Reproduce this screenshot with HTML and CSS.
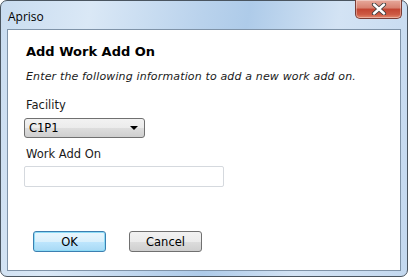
FILE: index.html
```html
<!DOCTYPE html>
<html lang="en">
<head>
<meta charset="utf-8">
<title>Apriso</title>
<link rel="stylesheet" href="styles.css">
</head>
<body>
<div class="window">
  <div class="titlebar">
    <span class="title">Apriso</span>
    <div class="close">
      <svg width="16" height="12" viewBox="0 0 16 12">
        <path d="M3 1.5 L13 10.5 M13 1.5 L3 10.5" stroke="#3d3d3d" stroke-width="4.2" stroke-linecap="round"/>
        <path d="M3 1.5 L13 10.5 M13 1.5 L3 10.5" stroke="#ffffff" stroke-width="2.4" stroke-linecap="round"/>
      </svg>
    </div>
  </div>
  <div class="pane">
    <h1 class="heading">Add Work Add On</h1>
    <p class="intro">Enter the following information to add a new work add on.</p>

    <div class="field">
      <label class="lbl">Facility</label>
      <div class="select">
        <span>C1P1</span>
        <span class="arrow"></span>
      </div>
    </div>

    <div class="field">
      <label class="lbl">Work Add On</label>
      <div class="input"></div>
    </div>

    <div class="buttons">
      <div class="btn ok">OK</div>
      <div class="btn">Cancel</div>
    </div>
  </div>
</div>
</body>
</html>
```

FILE: styles.css
```css
*{
box-sizing: border-box;
}

body{
margin: 0;
width: 408px;
height: 277px;
overflow: hidden;
font-family: "DejaVu Sans", Verdana, sans-serif;
}

.window{
width: 408px;
height: 277px;
border: 1px solid #4a5560;
border-radius: 7px;
background: linear-gradient(100deg, #c9dcf0 0%, #dae8f6 20%, #b9d2ec 45%, #aecbe9 55%, #d3e3f4 75%, #c3d8ef 100%);
display: flex;
flex-direction: column;
padding: 0 6px 5px 6px;
}

.titlebar{
height: 28px;
display: flex;
align-items: flex-start;
justify-content: space-between;
}

.title{
font-family: "Open Sans", "Noto Sans", sans-serif;
font-size: 12px;
color: #000;
margin-top: 7px;
margin-left: 1px;
}

.close{
width: 47px;
height: 19px;
margin-top: -1px;
margin-right: -1px;
border: 1px solid #7a3d36;
border-top: none;
border-radius: 0 0 5px 5px;
background: linear-gradient(#e7a99b 0%, #d7806f 45%, #c24431 50%, #cd5a44 80%, #e38a6f 100%);
display: flex;
align-items: center;
justify-content: center;
box-shadow: inset 0 0 0 1px rgba(255,255,255,0.35);
}

.pane{
flex: 1;
background: #fff;
border: 1px solid #7f93a8;
padding: 14px 18px 0 18px;
}

.heading{
font-size: 13px;
font-weight: bold;
margin: 0;
color: #000;
}

.intro{
font-size: 11px;
font-style: italic;
letter-spacing: 0.15px;
margin: 11px 0 0 0;
color: #1a1a1a;
}

.field{
margin-top: 16px;
}

.field + .field{
margin-top: 10px;
}

.lbl{
display: block;
font-size: 11.5px;
line-height: 13px;
color: #1a1a1a;
margin-bottom: 6px;
}

.field + .field .lbl{
margin-bottom: 5px;
}

.select{
width: 121px;
height: 20px;
margin-left: -2px;
border: 1px solid #707070;
border-radius: 3px;
background: linear-gradient(#f2f2f2 0%, #ebebeb 50%, #dddddd 51%, #cfcfcf 100%);
display: flex;
align-items: center;
justify-content: space-between;
padding: 0 6px 0 4px;
font-size: 11.5px;
color: #000;
}

.arrow{
width: 0;
height: 0;
border-left: 4px solid transparent;
border-right: 4px solid transparent;
border-top: 4px solid #000;
}

.input{
width: 200px;
height: 21px;
margin-left: -2px;
border: 1px solid #d5d9de;
border-radius: 2px;
background: #fff;
}

.buttons{
display: flex;
gap: 23px;
margin-top: 44px;
padding-left: 7px;
}

.btn{
width: 73px;
height: 21px;
border: 1px solid #707070;
border-radius: 3px;
background: linear-gradient(#f2f2f2 0%, #ebebeb 50%, #dddddd 51%, #cfcfcf 100%);
font-size: 11.5px;
color: #000;
display: flex;
align-items: center;
justify-content: center;
}

.ok{
border-color: #3c7fb1;
background: linear-gradient(#eaf6fd 0%, #d9f0fc 50%, #bee6fd 51%, #a7d9f5 100%);
box-shadow: inset 0 0 0 1px #8edcf6;
}
```
